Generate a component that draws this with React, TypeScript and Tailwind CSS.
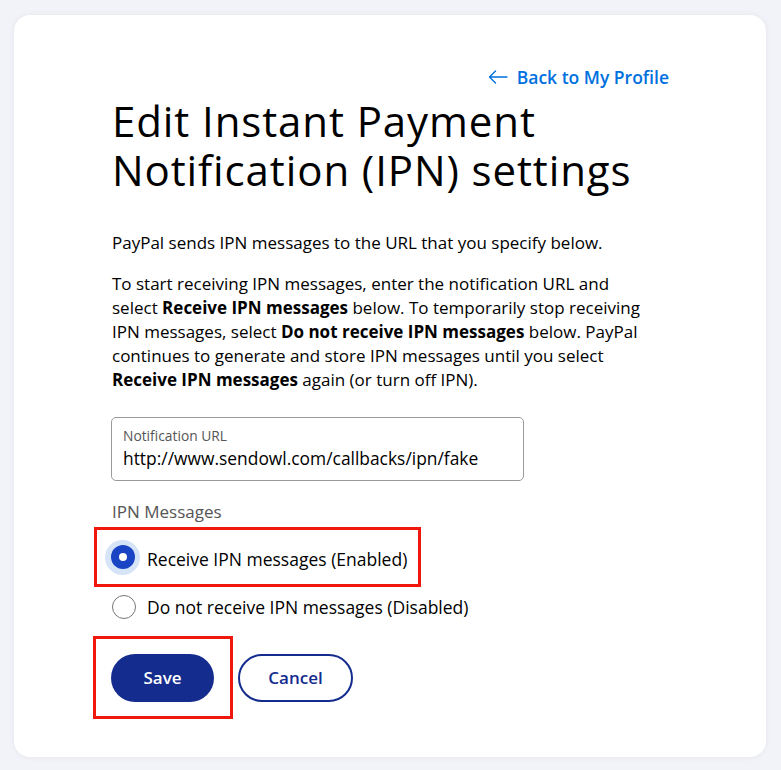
import React from "react";

export default function App() {
  return (
    <div
      className="min-h-[770px] w-full bg-[#f2f3f8] pt-[15px] pl-[14px] pr-[15px] pb-[13px]"
      style={{ fontFamily: '"Open Sans", "Noto Sans", sans-serif' }}
    >
      <div className="h-[742px] w-[752px] rounded-[16px] bg-white shadow-[0_0_6px_rgba(0,0,0,0.06)] pl-[98px] pr-[97px] pt-[47px]">
        <div className="flex justify-end">
          <a className="flex items-center gap-[9px] text-[#0070e0] text-[17.5px] font-semibold leading-[30px]">
            <svg width="20" height="14" viewBox="0 0 20 14" fill="none" stroke="#0070e0" strokeWidth="1.4" strokeLinecap="round" strokeLinejoin="round">
              <path d="M19 7H1.5M7.5 1L1.5 7L7.5 13" />
            </svg>
            Back to My Profile
          </a>
        </div>
        <h1 className="mt-[4px] text-[42px] leading-[49px] text-black font-normal tracking-[0.9px]">
          <div>Edit Instant Payment</div>
          <div>Notification (IPN) settings</div>
        </h1>
        <p className="mt-[37px] text-[17px] leading-[24px] text-black whitespace-nowrap">
          PayPal sends IPN messages to the URL that you specify below.
        </p>
        <p className="mt-[17px] text-[17px] leading-[24px] text-black whitespace-nowrap">
          To start receiving IPN messages, enter the notification URL and
          <br />
          select <b>Receive IPN messages</b> below. To temporarily stop receiving
          <br />
          IPN messages, select <b>Do not receive IPN messages</b> below. PayPal
          <br />
          continues to generate and store IPN messages until you select
          <br />
          <b>Receive IPN messages</b> again (or turn off IPN).
        </p>
        <div className="mt-[25px] ml-[-1px] w-[413px] h-[64px] rounded-[5px] border border-[#9a9a9a] px-[11px] pt-[9px]">
          <div className="text-[13.8px] leading-[18px] text-[#555]">Notification URL</div>
          <div className="text-[17.4px] leading-[26px] text-black whitespace-nowrap">
            http://www.sendowl.com/callbacks/ipn/fake
          </div>
        </div>
        <div className="mt-[19px] text-[17px] leading-[24px] text-[#555]">IPN Messages</div>
        <div className="mt-[3px] ml-[-18px] w-[327px] h-[60px] border-[3px] border-[#f0170d] flex items-center pl-[8px]">
          <span className="w-[35px] h-[35px] rounded-full bg-[#d6e4f8] flex items-center justify-center shrink-0">
            <span className="w-[24px] h-[24px] rounded-full bg-[#1944c4] flex items-center justify-center">
              <span className="w-[8px] h-[8px] rounded-full bg-white" />
            </span>
          </span>
          <span className="ml-[7px] pt-[4px] text-[17.5px] text-black whitespace-nowrap">Receive IPN messages (Enabled)</span>
        </div>
        <div className="mt-[8px] flex items-center h-[24px]">
          <span className="w-[24px] h-[24px] rounded-full border border-[#777] bg-white shrink-0" />
          <span className="ml-[11px] text-[17.5px] text-black whitespace-nowrap">Do not receive IPN messages (Disabled)</span>
        </div>
        <div className="mt-[17px] flex items-center">
          <div className="ml-[-19px] w-[140px] h-[83px] border-[3px] border-[#f0170d] flex items-center pl-[15px]">
            <button className="w-[103px] h-[48px] rounded-full bg-[#142c8e] text-white text-[17px] font-semibold">
              Save
            </button>
          </div>
          <button className="ml-[5px] w-[115px] h-[48px] rounded-full border-2 border-[#142c8e] text-[#142c8e] text-[17px] font-semibold bg-white">
            Cancel
          </button>
        </div>
      </div>
    </div>
  );
}
